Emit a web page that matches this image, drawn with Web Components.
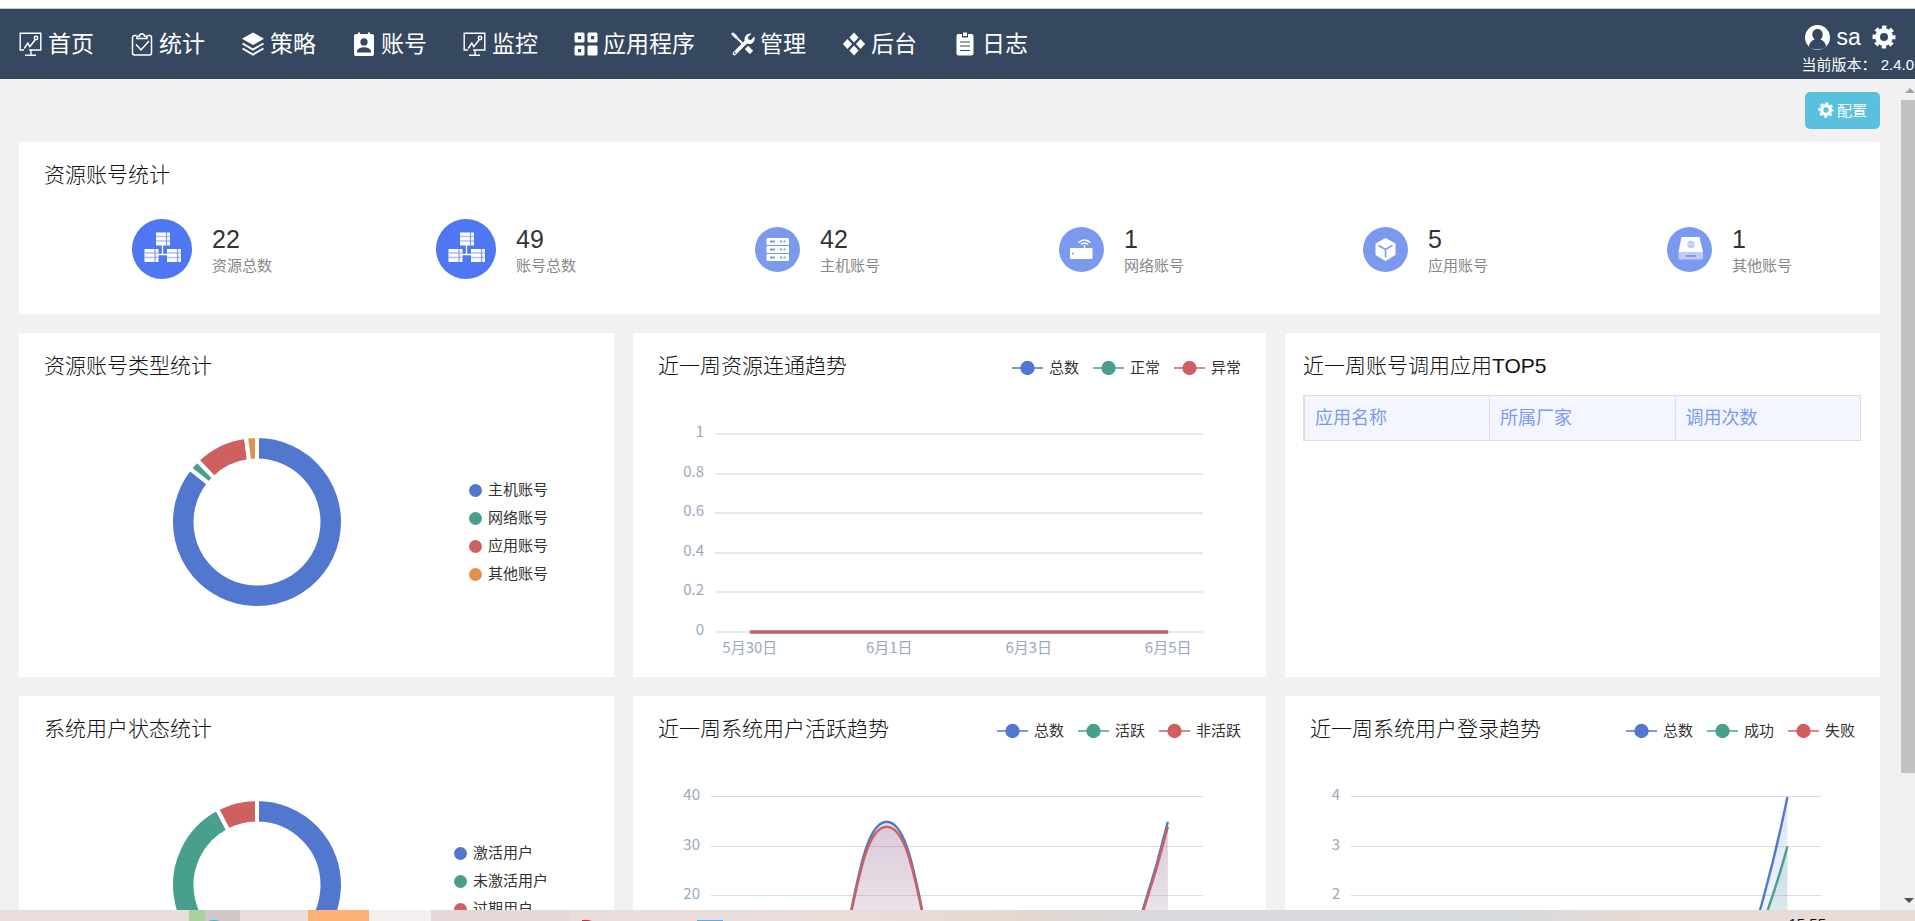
<!DOCTYPE html>
<html lang="zh-CN">
<head>
<meta charset="utf-8">
<title>首页</title>
<style>
  html, body { margin: 0; height: 100%; }
  body {
    overflow: hidden;
    font-family: "Liberation Sans", "Noto Sans CJK SC", sans-serif;
    font-size: 15px;
    color: #333;
    background: #f1f1f1;
  }
</style>
</head>
<body>
<account-dashboard></account-dashboard>

<script>
const COLORS = { blue: '#5177cf', green: '#479f8c', red: '#cd6160', orange: '#e0924c' };

const ICONS = {
  monitor: `<g fill="none" stroke="currentColor" stroke-width="1.5"><path d="M5 18H1.2V1.3h20.6V18H10M12 18.5V23M6 23.2h11" stroke-width="1.4"/><path d="M5.2 16.5l3.6-5.3 2 3.4 5.2-6.6"/><circle cx="17" cy="6" r="1.7"/></g>`,
  clipcheck: `<g fill="none" stroke="currentColor" stroke-width="1.5"><path d="M6.5 3.5H4.5a2 2 0 0 0-2 2V21a2 2 0 0 0 2 2h15a2 2 0 0 0 2-2V5.500a2 2 0 0 0-2-2h-2"/><path d="M7 6.500h10V4.200h-2.500a2.500 2.500 0 0 0-5 0H7zM6 12.500l5 5.500 8-9"/></g>`,
  layers: `<path fill="currentColor" d="M12 .5L23 6.800 12 13 1 6.800z"/><path d="M1.500 11.500L12 17.500l10.500-6M1.500 16.500L12 22.500l10.500-6" fill="none" stroke="currentColor" stroke-width="2"/>`,
  badge: `<path fill="currentColor" fill-rule="evenodd" d="M4 2h2V.5h2V2h8V.5h2V2h2a2 2 0 0 1 2 2v18a2 2 0 0 1-2 2H4a2 2 0 0 1-2-2V4a2 2 0 0 1 2-2zm8 4.300a3.500 3.500 0 1 0 0 7.200 3.500 3.500 0 0 0 0-7.200zM5 20.500h14v-1.200c0-2.400-4-4-7-4s-7 1.600-7 4z"/>`,
  grid: `<path fill="currentColor" fill-rule="evenodd" d="M2 .5h7a1.500 1.500 0 0 1 1.500 1.500v7A1.500 1.500 0 0 1 9 10.500H2A1.500 1.500 0 0 1 .5 9V2A1.500 1.500 0 0 1 2 .5zM4 4v3.200h3.200V4zM15 .5h7a1.500 1.500 0 0 1 1.500 1.500v7a1.500 1.500 0 0 1-1.500 1.500h-7A1.500 1.500 0 0 1 13.500 9V2A1.500 1.500 0 0 1 15 .5zM17 4v3.200h3.200V4zM2 13.500h7a1.500 1.500 0 0 1 1.500 1.500v7A1.500 1.500 0 0 1 9 23.500H2A1.500 1.500 0 0 1 .5 22v-7A1.500 1.500 0 0 1 2 13.500zM4 17v3.200h3.200V17zM15 13.500h7a1.500 1.500 0 0 1 1.500 1.500v7a1.500 1.500 0 0 1-1.500 1.500h-7a1.500 1.500 0 0 1-1.500-1.500v-7a1.500 1.500 0 0 1 1.500-1.500z"/>`,
  tools: `<g fill="none" stroke="currentColor" stroke-linecap="round"><path d="M3.500 21.500L16 9" stroke-width="3.600"/><path d="M3.500 3.500l8 8" stroke-width="1.800"/><path d="M2 2l3 3" stroke-width="3"/><path d="M15.500 15.500l5 5" stroke-width="4.600" stroke-linecap="butt"/></g><path fill="currentColor" d="M20.500 1.500l-3.600 3.700.6 2.300 2.400.6 3.500-3.500c.8 3-.4 5.600-2.600 6.800-2 1-4.200.7-5.800-.6-1.600-1.500-2-4.200-.8-6.300 1.200-2.200 3.600-3.500 6.300-3z"/><circle cx="3.700" cy="21.200" r=".9" fill="#364860"/>`,
  diamonds: `<path fill="currentColor" d="M12 .5l4.600 5L12 10.500l-4.600-5zM12 13.500l4.600 5-4.600 5-4.600-5zM5.500 7l4.600 5-4.600 5-4.600-5zM18.500 7l4.600 5-4.600 5-4.600-5z"/>`,
  log: `<path fill="currentColor" d="M5.500 2H9v3.500h6V2h3.500a2 2 0 0 1 2 2v17.500a2 2 0 0 1-2 2h-13a2 2 0 0 1-2-2V4a2 2 0 0 1 2-2z"/><path fill="currentColor" d="M10 .5h4v3.500h-4z"/><path d="M7 10h10M7 14h10M7 18.500h10" stroke="#364860" stroke-width="1.100"/>`,
  user: `<path fill="currentColor" fill-rule="evenodd" d="M12 0a12 12 0 1 0 0 24 12 12 0 0 0 0-24zm0 3.800c3 0 5 2.300 5 5.200 0 2-.9 3.900-2.300 4.900 3.300.9 5.200 3.800 5.500 6.400A11.500 11.500 0 0 1 12 23.400a11.500 11.500 0 0 1-8.200-3.100c.3-2.600 2.200-5.500 5.500-6.400A5.700 5.700 0 0 1 7 9c0-2.900 2-5.200 5-5.200z"/>`,
  gear: `<g fill="none" stroke="currentColor"><circle cx="12" cy="12" r="6.500" stroke-width="5"/><circle cx="12" cy="12" r="9.700" stroke-width="3.600" stroke-dasharray="4.200 3.418" stroke-dashoffset="2.100"/></g>`,
};

const rack = (x, y) => `<g transform="translate(${x} ${y})"><path fill="#fff" d="M0 0h14v13H0z"/><path stroke="#aebff9" d="M0 4h14M0 8.500h14" stroke-width="1.500"/><path stroke="#7d9af7" d="M10.500 0v13" stroke-width="1.200"/></g>`;
const STAT_ICONS = {
  cluster: `<svg viewBox="0 0 60 60" width="60" height="60"><circle cx="30" cy="30" r="30" fill="#4f77f3"/><path d="M30.500 26v10M26 35.500h9" stroke="#fff" stroke-width="1.300"/>${rack(24, 13.500)}${rack(12.500, 30)}${rack(35, 30)}</svg>`,
  host: `<svg viewBox="0 0 45 45" width="45" height="45"><circle cx="22.500" cy="22.500" r="22.500" fill="#7c9aed"/><g fill="#fff"><rect x="11.500" y="11" width="22.500" height="7" rx="1"/><rect x="11.500" y="19" width="22.500" height="7" rx="1"/><rect x="11.500" y="27" width="22.500" height="7" rx="1"/></g><path d="M15 14.500h5m5 0h2m1.500 0h2M15 22.500h5m5 0h2m1.500 0h2M15 30.500h5m5 0h2m1.500 0h2" stroke="#7c9aed" stroke-width="2"/></svg>`,
  router: `<svg viewBox="0 0 45 45" width="45" height="45"><circle cx="22.500" cy="22.500" r="22.500" fill="#7c9aed"/><rect x="11" y="21" width="22.500" height="11" rx="1" fill="#fff"/><path d="M25.500 18v4" stroke="#fff" stroke-width="1.400"/><path d="M19.500 15.700c3.200-3.700 8.800-3.700 12 0M22 17.600c2-2.200 5-2.200 7 0" fill="none" stroke="#fff" stroke-width="1.500"/><circle cx="14" cy="26.500" r="1" fill="#7c9aed"/></svg>`,
  box: `<svg viewBox="0 0 45 45" width="45" height="45"><circle cx="22.500" cy="22.500" r="22.500" fill="#7c9aed"/><path fill="#fff" d="M22.500 11l10 5.500v11.500l-10 6-10-6V16.500z"/><path d="M15.500 18.500l7 4 7-4M22.500 22.500v8" fill="none" stroke="#7c9aed" stroke-width="1.500"/></svg>`,
  disk: `<svg viewBox="0 0 45 45" width="45" height="45"><circle cx="22.500" cy="22.500" r="22.500" fill="#7c9aed"/><path fill="#fff" d="M14.500 10h18l3.500 15H11.500z"/><path fill="#bccbfb" d="M11.500 25H36v7.500H11.500z"/><circle cx="24" cy="17.500" r="3.800" fill="#bccbfb"/><path d="M20.500 17.500h7" stroke="#d7e0fd"/><path d="M19 29h10" stroke="#7c9aed" stroke-width="2"/></svg>`,
};

class BaseElement extends HTMLElement {
  constructor() { super(); this.attachShadow({ mode: 'open' }); }
  connectedCallback() { this.shadowRoot.innerHTML = this.render(); }
}

customElements.define('ui-icon', class extends BaseElement {
  render() {
    return `<style>:host{display:block;flex:none;width:24px;height:24px}svg{display:block;width:100%;height:100%}</style>
      <svg viewBox="0 0 24 24" aria-hidden="true">${ICONS[this.getAttribute('name')]}</svg>`;
  }
});

customElements.define('nav-item', class extends BaseElement {
  render() {
    return `<style>
      :host{display:block;flex:none}
      a{display:flex;align-items:center;gap:5px;height:100%;color:#fff;text-decoration:none;font-size:23px;line-height:30px}
    </style><a href="#"><ui-icon name="${this.getAttribute('icon')}"></ui-icon><span><slot></slot></span></a>`;
  }
});

customElements.define('app-header', class extends BaseElement {
  render() {
    return `<style>
      :host{display:flex;justify-content:space-between;flex:none;height:70px;border-top:1px solid #ccc;box-shadow:0 -8px #fff;margin-top:8px;background:#364860;color:#fff}
      nav{display:flex;gap:36px;padding-left:19px}
      .side{display:flex;flex-direction:column;gap:3px;padding:13px 1px 0 0}
      .user{display:flex;align-items:center;height:30px;padding-left:4px}
      .user a{display:flex;align-items:center;gap:6px;color:inherit;text-decoration:none;font-size:23px;line-height:30px}
      .user button{margin:0 0 0 11px;padding:0;border:0;background:none;color:inherit}
      .who{width:25px;height:25px}
      .version{line-height:20px;font-size:15px;white-space:nowrap}
    </style>
    <nav><slot></slot></nav>
    <div class="side">
      <div class="user"><a href="#"><ui-icon class="who" name="user"></ui-icon><span>sa</span></a>
      <button type="button" aria-label="设置"><ui-icon name="gear"></ui-icon></button></div>
      <div class="version">当前版本： 2.4.0</div>
    </div>`;
  }
});

customElements.define('config-button', class extends BaseElement {
  render() {
    return `<style>
      :host{display:block}
      button{display:flex;align-items:center;justify-content:center;gap:3px;width:75px;height:37px;padding:0 0 2px;border:0;border-radius:5px;background:#5bc0de;color:#fff;font-family:inherit;font-size:15px}
      ui-icon{width:16px;height:16px}
    </style><button type="button"><ui-icon name="gear"></ui-icon><slot></slot></button>`;
  }
});

customElements.define('dash-card', class extends BaseElement {
  render() {
    return `<style>
      :host{display:flex;flex-direction:column;min-width:0;background:#fff;--pad:25px}
      :host([compact]){--pad:18px}
      header{display:flex;align-items:center;justify-content:space-between;height:68px;padding:0 var(--pad);flex:none}
      :host([compact]) header{height:62px;padding-top:6px;box-sizing:border-box}
      h2{margin:0 0 2px;font-size:21px;line-height:30px;font-weight:300;color:#111;white-space:nowrap}
    </style>
    <header><h2>${this.getAttribute('heading')}</h2><slot name="legend"></slot></header>
    <slot></slot>`;
  }
});

customElements.define('stat-item', class extends BaseElement {
  render() {
    return `<style>
      :host{display:grid;grid-template-columns:1fr 1fr;column-gap:20px;align-items:center;height:60px;margin-right:-20px}
      .icon{display:flex;justify-content:flex-end}
      svg{display:block}
      dl{margin:0;padding-top:4px;display:flex;flex-direction:column}
      dd{margin:0;font-size:25px;line-height:30px;order:-1}
      dt{font-size:15px;line-height:24px;color:#888;white-space:nowrap}
    </style>
    <div class="icon">${STAT_ICONS[this.getAttribute('icon')]}</div>
    <dl><dt>${this.getAttribute('label')}</dt><dd><slot></slot></dd></dl>`;
  }
});

customElements.define('stat-row', class extends BaseElement {
  render() {
    return `<style>:host{display:grid;grid-template-columns:repeat(6,1fr);padding:9px 16px 35px 21px}</style><slot></slot>`;
  }
});

customElements.define('series-legend', class extends BaseElement {
  render() {
    const items = this.getAttribute('items').split(',').map(s => s.split(':'));
    return `<style>
      :host{display:block}
      ul{display:flex;gap:14px;margin:0;padding:0;list-style:none;font-family:"Noto Sans CJK SC",sans-serif}
      li{display:flex;align-items:center;gap:6px;font-size:15px;line-height:20px;white-space:nowrap}
      svg{display:block;padding-top:2px}
    </style><ul>${items.map(([c, t]) => `<li><svg width="31" height="16"><path d="M0 8h31" stroke="${COLORS[c]}" stroke-width="1.500"/><circle cx="15.500" cy="8" r="7.200" fill="${COLORS[c]}"/></svg><span>${t}</span></li>`).join('')}</ul>`;
  }
});

customElements.define('donut-chart', class extends BaseElement {
  render() {
    const items = this.getAttribute('items').split(',').map(s => s.split(':'));
    const total = items.reduce((a, i) => a + +i[2], 0);
    const R = 86, r = 61.5;
    let angle = 0, arcs = '';
    const at = (rad, a) => `${(rad * Math.sin(a)).toFixed(3)} ${(-rad * Math.cos(a)).toFixed(3)}`;
    for (const [c, , v] of items) {
      const next = angle + v / total * Math.PI * 2;
      const big = next - angle > Math.PI ? 1 : 0;
      arcs += `<path d="M${at(R, angle)}A${R} ${R} 0 ${big} 1 ${at(R, next)}L${at(r, next)}A${r} ${r} 0 ${big} 0 ${at(r, angle)}z" fill="${COLORS[c]}" stroke="#fff" stroke-width="4"/>`;
      angle = next;
    }
    return `<style>
      :host{display:flex;align-items:flex-start;height:276px}
      svg.ring{display:block;flex:none;margin:33px 0 0 calc(40% - 88px)}
      ul{margin:75px 66px 0 auto;padding:0;list-style:none;font-family:"Noto Sans CJK SC",sans-serif}
      li{display:flex;align-items:center;gap:6px;height:28px;font-size:15px;line-height:20px;white-space:nowrap}
      li span{padding-bottom:2px}
      i{width:13px;height:13px;border-radius:50%}
    </style>
    <svg class="ring" width="176" height="176" viewBox="-88 -88 176 176">${arcs}</svg>
    <ul>${items.map(([c, t]) => `<li><i style="background:${COLORS[c]}"></i><span>${t}</span></li>`).join('')}</ul>`;
  }
});

customElements.define('line-chart', class extends BaseElement {
  connectedCallback() {
    this.draw();
    new ResizeObserver(() => this.draw()).observe(this);
  }
  draw() {
    this.shadowRoot.innerHTML = `<style>
      :host{display:block;height:276px}
      svg{display:block;width:100%;height:276px;overflow:hidden}
      text{font:15px "Noto Sans CJK SC",sans-serif;fill:#9ba8bc}
    </style><svg></svg>`;
    const width = this.clientWidth;
    if (!width) return;
    const ticks = this.getAttribute('ticks').split(',');
    const labels = (this.getAttribute('labels') || '').split(',');
    const bold = this.hasAttribute('bold');
    const left = Math.round(width * 0.08 + +this.getAttribute('label-width') + 10);
    const right = Math.round(width * 0.9);
    const top = 33, bottom = 231, max = +ticks[0];
    const step = (right - left) / 7;
    const X = i => left + step * (i + 0.5);
    const Y = v => bottom - v / max * (bottom - top);
    let out = '';
    ticks.forEach((t, i) => {
      const y = Math.round(Y(+t)) - (bold ? 0 : 0.5);
      out += `<path d="M${left} ${y}H${right}" stroke="${bold ? '#e6e8ef' : '#d9dce5'}" stroke-width="${bold ? 2 : 1}"/>
        <text x="${left - 11}" y="${Math.round(Y(+t)) + 3}" text-anchor="end">${t}</text>`;
    });
    for (let i = 0; i < 7; i += 2)
      if (labels[i / 2]) out += `<text x="${X(i)}" y="252" text-anchor="middle">${labels[i / 2]}</text>`;
    this.getAttribute('series').split(';').forEach((s, n) => {
      const [c, raw] = s.split(':');
      const v = raw.split(',').map(Number);
      const peak = Math.max(...v);
      let d = `M${X(0)} ${Y(v[0])}`;
      for (let i = 1; i < v.length; i++) {
        const last = i === v.length - 1;
        const c1 = X(i - 1) + step * (last ? 0.4 : 0.5);
        const c2 = last ? X(i) : X(i) - step * 0.5;
        d += `C${c1} ${Y(v[i - 1])} ${c2} ${Y(v[i])} ${X(i)} ${Y(v[i])}`;
      }
      if (peak > 0)
        out += `<linearGradient id="g${n}" gradientUnits="userSpaceOnUse" x1="0" x2="0" y1="${Y(peak)}" y2="${bottom}"><stop stop-color="${COLORS[c]}" stop-opacity=".2"/><stop offset="1" stop-color="${COLORS[c]}" stop-opacity="0"/></linearGradient>
          <path d="${d}L${X(6)} ${bottom}H${X(0)}z" fill="url(#g${n})"/>`;
      out += `<path d="${d}" fill="none" stroke="${COLORS[c]}" stroke-width="${peak > 0 ? 2.4 : 3}"/>`;
    });
    this.shadowRoot.querySelector('svg').innerHTML = out;
  }
});

customElements.define('top-table', class extends BaseElement {
  render() {
    return `<style>
      :host{display:block;padding:0 19px 0 18px}
      table{width:100%;border-collapse:collapse;table-layout:fixed;border:1px solid #ddd;border-left-width:2px}
      th{height:45px;padding:0 10px;box-sizing:border-box;border:1px solid #ddd;background:#f3f6ff;color:#7b9aee;font-size:18px;line-height:44px;font-weight:400;text-align:left}
    </style>
    <table><thead><tr>${this.getAttribute('columns').split(',').map(c => `<th scope="col">${c}</th>`).join('')}</tr></thead><tbody></tbody></table>`;
  }
});

customElements.define('scroll-rail', class extends BaseElement {
  render() {
    return `<style>
      :host{display:flex;flex-direction:column;flex:none;width:14px;background:#f1f1f1}
      svg{display:block;flex:none}
      .track{flex:1;min-height:0}
      .thumb{height:85%;background:#c1c1c1}
    </style>
    <svg width="14" height="21"><path d="M4 14l5-5 5 5z" fill="#a3a3a3"/></svg>
    <div class="track"><div class="thumb"></div></div>
    <svg width="14" height="18"><path d="M3 6h10l-5 5z" fill="#505050"/></svg>`;
  }
});

customElements.define('desk-bar', class extends BaseElement {
  render() {
    return `<style>
      :host{display:flex;flex:none;height:11px;overflow:hidden;background:linear-gradient(90deg,#e9dcda 0 30%,#ebdcda 45%,#e4d8cf 53%,#d9d9dd 60%,#d6dadd 78%,#e8dad4 86%,#e9dbd6)}
      .tile{flex:none}
      .fill{flex:1}
      time{flex:none;padding:4px 89px 0 0;font-size:15px;line-height:20px;color:#111}
      svg{display:block}
    </style>
    <svg class="tile" width="760" height="11"><path fill="#a9d19b" d="M189 0h16v11h-16z"/><path fill="#d1c7c5" d="M205 0h35v11h-35z"/><path fill="#fcb076" d="M308 0h61v11h-61z"/><path fill="#f4efee" d="M369 0h62v11h-62z"/><path fill="#e4d8d7" d="M431 0h138v11H431z"/><path fill="#28bdd3" d="M208 11q6-2 12 0z"/><path fill="#e0213c" d="M582 10h6l4 1h-10z"/><path fill="#49b3f5" d="M697 10h26v1h-26z"/></svg>
    <div class="fill"></div><time>15:55</time>`;
  }
});

customElements.define('account-dashboard', class extends BaseElement {
  render() {
    return `<style>
      :host{display:flex;flex-direction:column;height:100vh;overflow:hidden}
      .view{display:flex;flex:1;min-height:0;overflow:hidden}
      main{flex:1;min-width:0;padding:0 21px 0 19px;overflow:hidden}
      .bar{display:flex;justify-content:flex-end;padding:13px 0}
      .cards{display:grid;grid-template-columns:595fr 633fr 595fr;gap:19px;margin-top:19px}
    </style>
    <app-header>
      <nav-item icon="monitor">首页</nav-item>
      <nav-item icon="clipcheck">统计</nav-item>
      <nav-item icon="layers">策略</nav-item>
      <nav-item icon="badge">账号</nav-item>
      <nav-item icon="monitor">监控</nav-item>
      <nav-item icon="grid">应用程序</nav-item>
      <nav-item icon="tools">管理</nav-item>
      <nav-item icon="diamonds">后台</nav-item>
      <nav-item icon="log">日志</nav-item>
    </app-header>
    <div class="view">
      <main>
        <div class="bar"><config-button>配置</config-button></div>
        <dash-card heading="资源账号统计">
          <stat-row>
            <stat-item icon="cluster" label="资源总数">22</stat-item>
            <stat-item icon="cluster" label="账号总数">49</stat-item>
            <stat-item icon="host" label="主机账号">42</stat-item>
            <stat-item icon="router" label="网络账号">1</stat-item>
            <stat-item icon="box" label="应用账号">5</stat-item>
            <stat-item icon="disk" label="其他账号">1</stat-item>
          </stat-row>
        </dash-card>
        <div class="cards">
          <dash-card heading="资源账号类型统计">
            <donut-chart items="blue:主机账号:42,green:网络账号:1,red:应用账号:5,orange:其他账号:1"></donut-chart>
          </dash-card>
          <dash-card heading="近一周资源连通趋势">
            <series-legend slot="legend" items="blue:总数,green:正常,red:异常"></series-legend>
            <line-chart bold label-width="21" ticks="1,0.8,0.6,0.4,0.2,0" labels="5月30日,6月1日,6月3日,6月5日" series="blue:0,0,0,0,0,0,0;red:0,0,0,0,0,0,0"></line-chart>
          </dash-card>
          <dash-card compact heading="近一周账号调用应用TOP5">
            <top-table columns="应用名称,所属厂家,调用次数"></top-table>
          </dash-card>
          <dash-card heading="系统用户状态统计">
            <donut-chart items="blue:激活用户:20,green:未激活用户:16,red:过期用户:3"></donut-chart>
          </dash-card>
          <dash-card heading="近一周系统用户活跃趋势">
            <series-legend slot="legend" items="blue:总数,green:活跃,red:非活跃"></series-legend>
            <line-chart label-width="17" ticks="40,30,20,10,0" series="blue:0,0,35,0,0,0,35;red:0,0,34,0,0,0,34"></line-chart>
          </dash-card>
          <dash-card heading="近一周系统用户登录趋势">
            <series-legend slot="legend" items="blue:总数,green:成功,red:失败"></series-legend>
            <line-chart label-width="8" ticks="4,3,2,1,0" series="blue:0,0,0,0,0,0,4;green:0,0,0,0,0,0,3"></line-chart>
          </dash-card>
        </div>
      </main>
      <scroll-rail></scroll-rail>
    </div>
    <desk-bar></desk-bar>`;
  }
});
</script>
</body>
</html>
